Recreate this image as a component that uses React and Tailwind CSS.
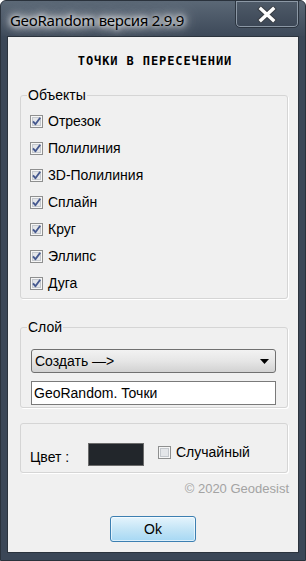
import React from "react";

const ui = { fontFamily: '"Liberation Sans", Arial, sans-serif' };

function CheckBox({ checked }) {
  return (
    <svg width="13" height="13" viewBox="0 0 13 13" className="shrink-0">
      <rect x="0.5" y="0.5" width="12" height="12" fill="#f6f6f6" stroke="#8e8f8f" />
      <rect x="2.5" y="2.5" width="8" height="8" fill="#e4e6e9" stroke="#c4c8cd" />
      {checked && (
        <path
          d="M3 6.4 L5.4 9.2 L10.2 2.8"
          fill="none"
          stroke="#46598f"
          strokeWidth="1.9"
          strokeLinejoin="round"
        />
      )}
    </svg>
  );
}

const boxBorder =
  "ml-[12px] mr-[10px] border border-[#d5d5d5] rounded-[3px] shadow-[1px_1px_0_#ffffff]";

function Group({ title, legendClass, className, children }) {
  return (
    <fieldset className={boxBorder + " " + className}>
      <legend className={"px-[1px] text-[14px] leading-[16px] text-black " + legendClass}>
        {title}
      </legend>
      {children}
    </fieldset>
  );
}

const objects = [
  "Отрезок",
  "Полилиния",
  "3D-Полилиния",
  "Сплайн",
  "Круг",
  "Эллипс",
  "Дуга",
];

export default function App() {
  return (
    <div
      className="w-[306px] h-[561px] flex flex-col rounded-t-[6px] bg-[#3b4757] border border-[#2a323c] overflow-hidden"
      style={ui}
    >
      {/* title bar */}
      <div className="h-[35px] flex justify-between bg-linear-to-b from-[#5b6876] to-[#3d4959]">
        <div
          className="pl-[9px] pt-[9px] text-[15px] leading-[20px] tracking-[-0.3px] text-black [text-shadow:0_0_5px_#ffffff,0_0_9px_#ffffff,0_0_13px_#ffffff,0_0_18px_rgba(255,255,255,0.7)]"
          style={{ fontFamily: '"Noto Sans", sans-serif' }}
        >
          GeoRandom версия 2.9.9
        </div>
        <div className="mr-[6px] -mt-[1px] w-[64px] h-[28px] flex items-center justify-center rounded-b-[5px] border border-[#2c3540] shadow-[inset_0_0_0_1px_#8c98a5] bg-linear-to-b from-[#4f5b69] to-[#3c4756]">
          <svg width="20" height="17" viewBox="0 0 20 17">
            <path d="M4 3 L16 14 M16 3 L4 14" stroke="#3a3f46" strokeWidth="5.5" strokeLinecap="square" />
            <path d="M4 3 L16 14 M16 3 L4 14" stroke="#ffffff" strokeWidth="3.4" strokeLinecap="square" />
          </svg>
        </div>
      </div>

      {/* client area */}
      <div className="mx-[6px] h-[517px] bg-[#f0f0f0] border border-[#2b333d] flex flex-col">
        <div
          className="pt-[16px] pl-[4px] text-center text-[12px] leading-[16px] font-bold tracking-[0.9px] text-black"
          style={{ fontFamily: '"DejaVu Sans Mono", monospace' }}
        >
          ТОЧКИ В ПЕРЕСЕЧЕНИИ
        </div>

        <Group
          title="Объекты"
          legendClass="-ml-[3px]"
          className="mt-[18px] pt-[5px] pb-[1px] pl-[9px]"
        >
          {objects.map((name) => (
            <label key={name} className="h-[27px] flex items-center text-[14px] text-black">
              <CheckBox checked />
              <span className="ml-[5px]">{name}</span>
            </label>
          ))}
        </Group>

        <Group
          title="Слой"
          legendClass="-ml-[4px]"
          className="mt-[20px] pt-[14px] pb-[2px] pl-[10px] pr-[11px]"
        >
          <div className="h-[24px] flex items-center justify-between rounded-[3px] border border-[#707070] bg-linear-to-b from-[#f2f2f2] via-[#e6e6e6] to-[#d2d2d2] pl-[3px] pr-[6px] text-[14px] text-black">
            <span>Создать —&gt;</span>
            <svg width="9" height="5" viewBox="0 0 9 5">
              <path d="M0 0 L9 0 L4.5 5 Z" fill="#000000" />
            </svg>
          </div>
          <div className="mt-[8px] h-[24px] flex items-center border border-[#7a7a7a] bg-white pl-[2px] text-[14px] text-black">
            GeoRandom. Точки
          </div>
        </Group>

        <div className={boxBorder + " mt-[15px] h-[50px] flex items-start pt-[19px] pl-[9px]"}>
          <span className="mt-[6px] w-[58px] text-[14px] leading-[16px] text-black">Цвет :</span>
          <div className="w-[56px] h-[23px] bg-[#22262b] border border-[#6b6b6b]" />
          <div className="ml-[14px] mt-[1px] h-[16px] flex items-center">
            <CheckBox checked={false} />
            <span className="ml-[5px] text-[14px] leading-[16px] text-black">Случайный</span>
          </div>
        </div>

        <div className="mt-[8px] pr-[9px] text-right text-[13px] leading-[16px] text-[#a3a3a3]">
          © 2020 Geodesist
        </div>

        <div className="mt-[19px] flex justify-center">
          <button className="w-[86px] h-[26px] rounded-[3px] border border-[#3c7fb1] bg-linear-to-b from-[#e5f4fc] via-[#c4e5f6] to-[#a6d8f4] shadow-[inset_0_0_0_1px_rgba(255,255,255,0.6)] text-[14px] text-black">
            Ok
          </button>
        </div>
      </div>
    </div>
  );
}
